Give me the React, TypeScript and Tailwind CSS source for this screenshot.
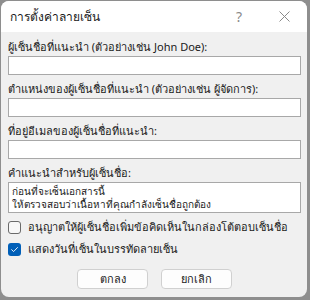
import React from "react";

const Field = ({ label, tall = false, children }: { label: string; tall?: boolean; children?: React.ReactNode }) => (
  <div className="flex flex-col">
    <div className="h-[14px] leading-[14px] text-[11px] text-[#1a1a1a] whitespace-nowrap">{label}</div>
    <div
      className={`mt-[2px] bg-white border border-[#a8a8a8] ${tall ? "h-[31px] px-[3px] pt-[2px]" : "h-[19px]"} text-[10px] leading-[13px] text-[#1a1a1a]`}
    >
      {children}
    </div>
  </div>
);

const Check = ({ checked, label }: { checked: boolean; label: string }) => (
  <div className="flex items-center gap-[7px] h-[14px]">
    {checked ? (
      <span className="w-[13px] h-[13px] rounded-[3px] bg-[#005fb8] flex items-center justify-center">
        <svg width="9" height="9" viewBox="0 0 10 10" fill="none">
          <path d="M1.8 5.2 L4 7.3 L8.3 2.8" stroke="white" strokeWidth="1" strokeLinecap="round" strokeLinejoin="round" />
        </svg>
      </span>
    ) : (
      <span className="w-[13px] h-[13px] rounded-[3px] border border-[#6a6a6a] bg-[#f7f7f7]" />
    )}
    <span className="text-[11px] leading-[14px] text-[#1a1a1a] whitespace-nowrap">{label}</span>
  </div>
);

export default function App() {
  return (
    <div
      className="w-[310px] h-[300px] bg-[#8e8e8e] pl-[1px] pt-[1px]"
      style={{ fontFamily: '"Noto Sans", "Liberation Sans", sans-serif' }}
    >
      <div className="w-[306px] h-[296px] rounded-[8px] overflow-hidden bg-[#f0f0f0] flex flex-col">
        <div className="h-[31px] bg-white flex items-center pl-[9px]">
          <span className="text-[12px] text-[#1a1a1a]">การตั้งค่าลายเซ็น</span>
          <span className="ml-auto mr-[37px] text-[14px] text-[#8a8a8a]">?</span>
          <svg className="mr-[17px]" width="11" height="11" viewBox="0 0 11 11">
            <path d="M0.5 0.5 L10.5 10.5 M10.5 0.5 L0.5 10.5" stroke="#8a8a8a" strokeWidth="1" />
          </svg>
        </div>
        <div className="flex flex-col pl-[7px] pr-[6px] pt-[8px]">
          <div className="flex flex-col gap-[7px]">
            <Field label="ผู้เซ็นชื่อที่แนะนำ (ตัวอย่างเช่น John Doe):" />
            <Field label="ตำแหน่งของผู้เซ็นชื่อที่แนะนำ (ตัวอย่างเช่น ผู้จัดการ):" />
            <Field label="ที่อยู่อีเมลของผู้เซ็นชื่อที่แนะนำ:" />
            <Field label="คำแนะนำสำหรับผู้เซ็นชื่อ:" tall>
              <div>ก่อนที่จะเซ็นเอกสารนี้</div>
              <div>ให้ตรวจสอบว่าเนื้อหาที่คุณกำลังเซ็นชื่อถูกต้อง</div>
            </Field>
          </div>
          <div className="mt-[7px] flex flex-col gap-[8px]">
            <Check checked={false} label="อนุญาตให้ผู้เซ็นชื่อเพิ่มข้อคิดเห็นในกล่องโต้ตอบเซ็นชื่อ" />
            <Check checked label="แสดงวันที่เซ็นในบรรทัดลายเซ็น" />
          </div>
          <div className="mt-[13px] flex gap-[13px] pl-[69px]">
            <button className="w-[71px] h-[20px] rounded-[4px] bg-[#fdfdfd] border border-[#d0d0d0] text-[11px] text-[#1a1a1a]">
              ตกลง
            </button>
            <button className="w-[71px] h-[20px] rounded-[4px] bg-[#fdfdfd] border border-[#d0d0d0] text-[11px] text-[#1a1a1a]">
              ยกเลิก
            </button>
          </div>
        </div>
      </div>
    </div>
  );
}
